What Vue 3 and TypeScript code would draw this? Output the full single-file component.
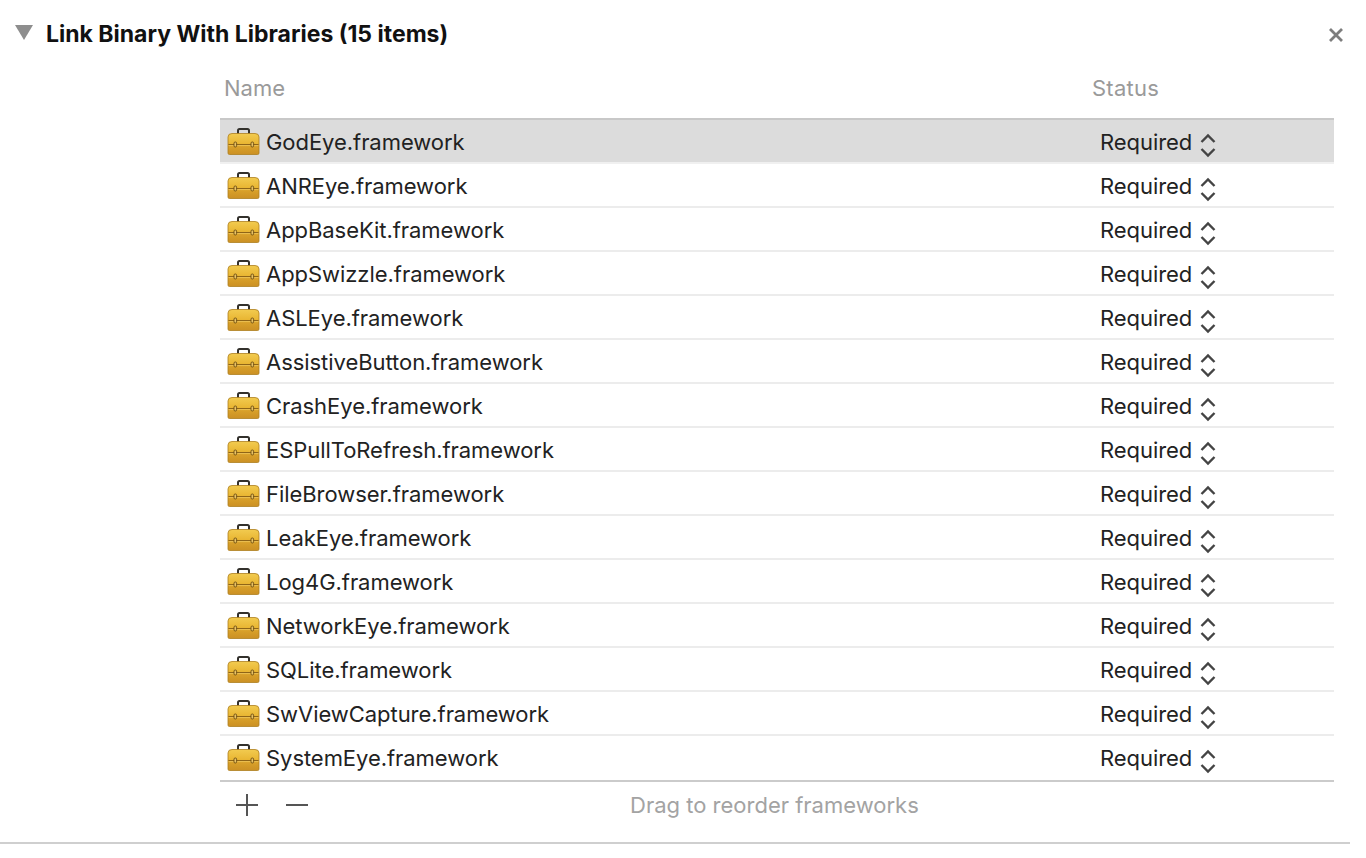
<script setup lang="ts">
const items: string[] = [
  'GodEye', 'ANREye', 'AppBaseKit', 'AppSwizzle', 'ASLEye', 'AssistiveButton', 'CrashEye',
  'ESPullToRefresh', 'FileBrowser', 'LeakEye', 'Log4G', 'NetworkEye', 'SQLite', 'SwViewCapture', 'SystemEye',
]
</script>

<template>
  <div class="page">
    <header class="head">
      <svg class="tri" width="18" height="15" viewBox="0 0 18 15"><path d="M0 0H18L9 15Z" fill="#8e8e8e" /></svg>
      <h1 class="title">Link Binary With Libraries (15 items)</h1>
      <svg class="close" width="14" height="14" viewBox="0 0 14 14"><path d="M1 1L13 13M13 1L1 13" stroke="#7d7d7d" stroke-width="2.8" fill="none" /></svg>
    </header>
    <section class="table">
      <div class="cols">
        <span class="c-name">Name</span>
        <span class="c-status">Status</span>
      </div>
      <div class="list">
        <div v-for="(it, i) in items" :key="it" class="row" :class="{ sel: i === 0, last: i === items.length - 1 }">
          <svg class="box" width="33" height="27" viewBox="0 0 33 27">
            <defs>
              <linearGradient :id="'g' + i" x1="0" y1="0" x2="0" y2="1">
                <stop offset="0" stop-color="#f2cb50" />
                <stop offset="0.48" stop-color="#e9b633" />
                <stop offset="0.52" stop-color="#dca52b" />
                <stop offset="1" stop-color="#cb9024" />
              </linearGradient>
            </defs>
            <path d="M11 7V2.500Q11 1 12.500 1H20.500Q22 1 22 2.500V7" fill="none" stroke="#33312c" stroke-width="2" />
            <path d="M1 9Q1 5.500 5 5.500H28Q32 5.500 32 9V25Q32 26.500 30.500 26.500H2.500Q1 26.500 1 25Z" :fill="'url(#g' + i + ')'" stroke="#ad7f1e" stroke-width="0.800" />
            <path d="M1.500 16.500H31.500" stroke="#8f6518" stroke-width="1" />
            <path d="M1.500 17.600H31.500" stroke="#f2cd66" stroke-width="0.700" />
            <rect x="7" y="14" width="2.600" height="5" rx="1.200" fill="#e8c264" stroke="#6b4c10" stroke-width="0.900" />
            <rect x="24" y="14" width="2.600" height="5" rx="1.200" fill="#e8c264" stroke="#6b4c10" stroke-width="0.900" />
          </svg>
          <span class="name">{{ it }}.framework</span>
          <span class="status">Required</span>
          <svg class="chev" width="16" height="25" viewBox="0 0 16 25">
            <path d="M1.500 9L8 2.500L14.500 9M1.500 16L8 22.500L14.500 16" fill="none" stroke="#444" stroke-width="2.400" />
          </svg>
        </div>
      </div>
      <footer class="foot">
        <svg class="plus" width="22" height="22" viewBox="0 0 22 22"><path d="M0 11H22M11 0V22" stroke="#555" stroke-width="2" /></svg>
        <svg class="minus" width="22" height="22" viewBox="0 0 22 22"><path d="M0 11H22" stroke="#555" stroke-width="2" /></svg>
        <span class="hint">Drag to reorder frameworks</span>
      </footer>
    </section>
    <div class="rule"></div>
  </div>
</template>

<style>
html, body { margin: 0; background: #fff; }
</style>

<style scoped>
.page {
  width: 1366px;
  height: 858px;
  box-sizing: border-box;
  overflow: hidden;
  background: #fff;
  font-family: Inter, "Liberation Sans", sans-serif;
  color: #222;
  padding-top: 20px;
}
.head {
  display: flex;
  align-items: center;
  height: 28px;
  padding: 0 23px 0 15px;
}
.tri { margin-right: 13px; margin-top: -3px; }
.title {
  margin: 0;
  font-size: 23px;
  font-weight: 700;
  color: #111;
  flex: 1;
}
.close { margin-top: 1px; }
.table { margin: 0 32px 0 220px; }
.cols {
  display: flex;
  height: 70px;
  box-sizing: border-box;
  padding-top: 27px;
  font-size: 22px;
  color: #9a9a9a;
  line-height: 26px;
}
.c-name { margin-left: 4px; width: 868px; }
.c-status { letter-spacing: 0.25px; }
.row {
  display: flex;
  align-items: center;
  height: 44px;
  box-sizing: border-box;
  border-bottom: 2px solid #ececec;
  font-size: 22px;
  letter-spacing: -0.05px;
  padding-left: 7px;
}
.row.sel {
  height: 46px;
  background: #dcdcdc;
  border-top: 2px solid #c8c8c8;
  border-bottom-color: #f0f0f0;
}
.row.last {
  height: 46px;
  padding-bottom: 2px;
  border-bottom: 2px solid #cbcbcb;
}
.box { flex: none; margin-right: 6px; }
.name { width: 834px; padding-top: 2px; }
.status { width: 93px; padding-top: 2px; }
.chev { flex: none; margin-top: 8px; margin-left: 7px; }
.foot {
  position: relative;
  display: flex;
  align-items: center;
  height: 46px;
  padding-left: 16px;
}
.plus { margin-right: 28px; }
.hint {
  position: absolute;
  left: 410px;
  top: 10px;
  font-size: 22px;
  color: #a3a3a3;
  line-height: 26px;
}
.rule {
  margin-top: 14px;
  width: 1350px;
  height: 2px;
  background: #cfcfcf;
}
</style>
